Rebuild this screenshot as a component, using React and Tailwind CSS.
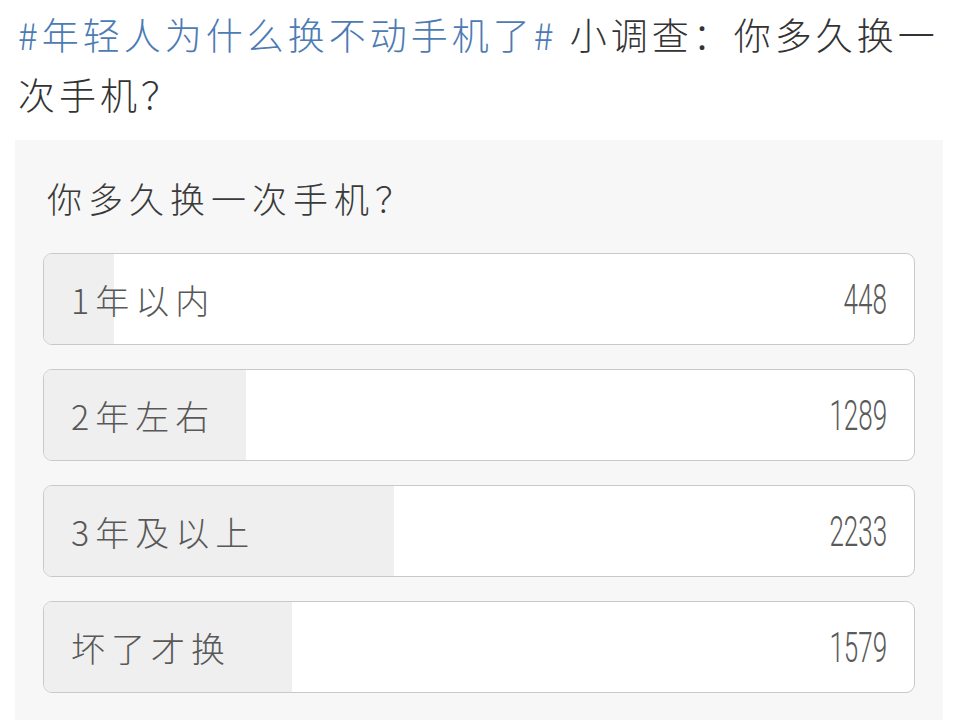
import React from "react";

const options = [
  { label: "1年以内", count: 448 },
  { label: "2年左右", count: 1289 },
  { label: "3年及以上", count: 2233 },
  { label: "坏了才换", count: 1579 },
];
const total = options.reduce((s, o) => s + o.count, 0);

const cjk = { fontFamily: '"Noto Sans CJK SC", "Noto Sans", sans-serif' };

export default function App() {
  return (
    <div className="w-[976px] h-[720px] overflow-hidden bg-white" style={cjk}>
      <div className="pl-[18px] pr-[10px] pt-[4px] text-[37px] leading-[60px] tracking-[4px] font-light text-[#333333]">
        <div className="whitespace-nowrap">
          <span className="text-[#4d7bb3]">#年轻人为什么换不动手机了#</span>
          <span> 小调查：你多久换一</span>
        </div>
        <div>次手机？</div>
      </div>
      <div className="mt-[16px] ml-[15px] w-[928px] h-[600px] bg-[#f7f7f7] px-[28px] pt-[36px]">
        <div className="pl-[4px] text-[35px] leading-[44px] tracking-[6px] font-light text-[#3a3a3a]">
          你多久换一次手机？
        </div>
        <div className="mt-[33px] flex flex-col gap-[24px]">
          {options.map((o) => (
            <div
              key={o.label}
              className="relative h-[92px] rounded-[9px] border-[1.5px] border-[#c9c9c9] bg-white overflow-hidden"
            >
              <div
                className="absolute left-0 top-0 bottom-0 bg-[#efefef]"
                style={{ width: `${(o.count / total) * 100}%` }}
              />
              <div className="relative h-full flex items-center justify-between pl-[27px] pr-[27px]">
                <span className="text-[34px] tracking-[6px] font-light text-[#585858]">
                  {o.label}
                </span>
                <span
                  className="inline-block origin-right scale-x-[0.62] text-[42px] font-light text-[#5a5a5a]"
                  style={{ fontFamily: "Roboto, sans-serif" }}
                >
                  {o.count}
                </span>
              </div>
            </div>
          ))}
        </div>
      </div>
    </div>
  );
}
